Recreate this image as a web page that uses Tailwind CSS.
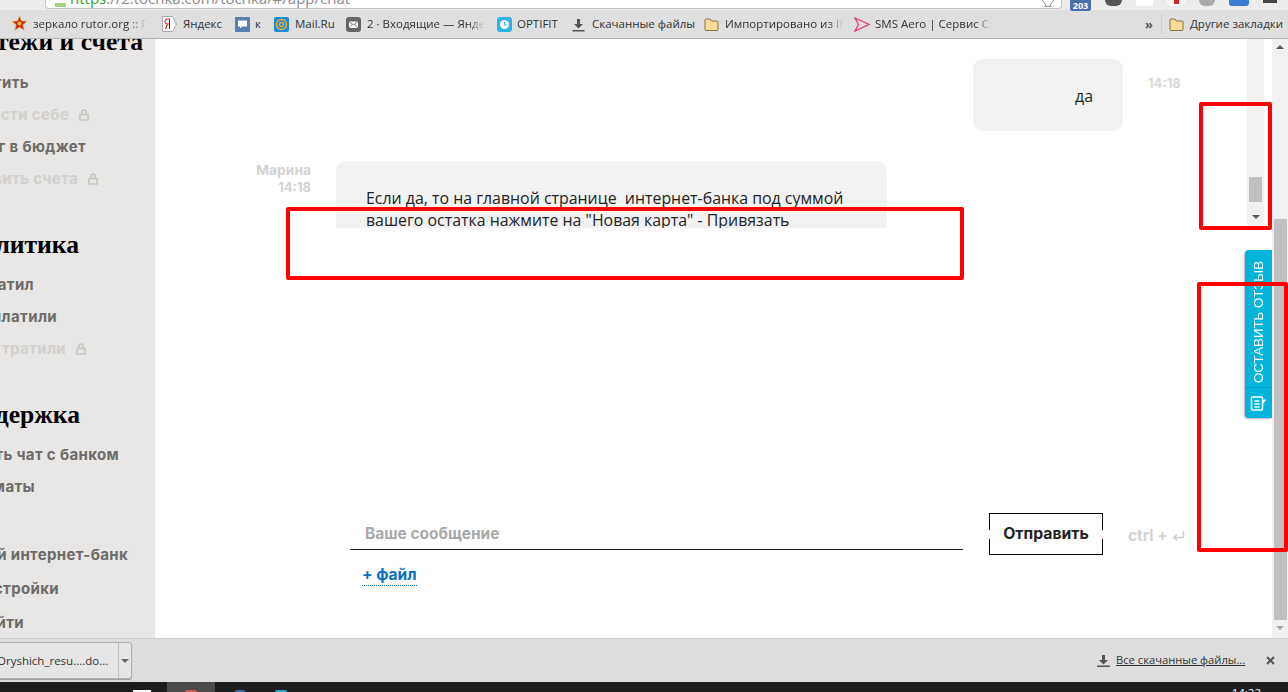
<!DOCTYPE html>
<html lang="ru">
<head>
<meta charset="utf-8">
<script src="https://cdn.jsdelivr.net/npm/@tailwindcss/browser@4"></script>
<title>Чат</title>
</head>
<body class="m-0 overflow-hidden bg-white">
<div class="relative flex h-[692px] w-[1288px] flex-col overflow-hidden font-['Open_Sans',sans-serif]">

  <!-- browser chrome -->
  <header class="relative z-10 flex h-[39px] shrink-0 flex-col border-b border-[#b4b4b4] bg-[#dfdfdf]">
    <div class="flex h-[10px] shrink-0 items-start bg-[#ececec]">
      <div class="ml-[45px] flex h-[9px] w-[1017px] items-end overflow-hidden rounded-b-sm border-b border-x border-[#c4c4c4] bg-white">
        <div class="ml-[9px] mb-[1px] h-[4px] w-[11px] shrink-0 bg-[#a5cf7d]"></div>
        <span class="ml-[4px] mb-[3px] whitespace-nowrap text-[15px] leading-[14px] text-[#8b8b8b]"><span class="text-[#2f9e2f]">https</span>://2.tochka.com/tochka/#/app/chat</span>
        <svg class="mb-[1px] ml-auto mr-[6px]" width="14" height="7" viewBox="0 0 14 7"><path d="M1 0l4 5-1 2 3-1 3 1-1-2 4-5" fill="none" stroke="#8a8a8a"/></svg>
      </div>
      <div class="ml-[8px] flex h-[11px] items-start gap-[14px]">
        <div class="flex h-[11px] w-[21px] items-end justify-center rounded-b-[2px] bg-[#4a6fa8] text-[9px] font-bold leading-[10px] text-white">203</div>
        <div class="h-[6px] w-[17px] rounded-b-full bg-[#555]"></div>
        <div class="h-[6px] w-[17px] bg-white"></div>
        <div class="flex h-[6px] w-[18px] justify-center rounded-b-full bg-white"><div class="h-[4px] w-[5px] bg-[#d22]"></div></div>
        <div class="h-[6px] w-[16px] rounded-b-[6px] bg-[#aaa]"></div>
        <div class="h-[6px] w-[20px] rounded-b-[3px] bg-[#3a7bd5]"></div>
        <div class="h-[3px] w-[14px] bg-[#444]"></div>
      </div>
    </div>
    <nav class="flex h-[28px] items-center whitespace-nowrap pl-[12px] text-[11.5px] text-[#333]">
      <a class="flex w-[150px] items-center gap-[6px] overflow-hidden">
        <svg class="shrink-0" width="15" height="16" viewBox="0 0 15 16"><path d="M7.500 0l2 5 5.500.3-4.200 3.500 1.400 5.400-4.700-3-4.700 3 1.400-5.400L0 5.300 5.500 5z" fill="#c9201c" stroke="#eebb33" stroke-width=".7"/><circle cx="7.500" cy="7.500" r="2" fill="#eebb33"/></svg>
        <span class="[mask-image:linear-gradient(to_right,black_85%,transparent)] w-[114px] overflow-hidden">зеркало rutor.org :: Па</span>
      </a>
      <a class="flex w-[73px] items-center gap-[6px]">
        <svg class="shrink-0" width="15" height="16" viewBox="0 0 15 16"><path d="M.5.500h10l4 7.500-4 7.500H.5z" fill="#fff" stroke="#aaa"/><path d="M7.500 3H5.500a2 2 0 0 0 0 5h2M7.500 3v10M5.500 8l-2 5" fill="none" stroke="#d00"/></svg><span>Яндекс</span>
      </a>
      <a class="flex w-[39px] items-center gap-[5px]">
        <svg class="shrink-0" width="15" height="15" viewBox="0 0 15 15"><rect width="15" height="15" fill="#5a7fae"/><path d="M3 3.500h9v6H7l-2 2v-2H3z" fill="#fff"/></svg><span>к</span>
      </a>
      <a class="flex w-[72px] items-center gap-[6px]">
        <svg class="shrink-0" width="15" height="15" viewBox="0 0 15 15"><rect width="15" height="15" rx="2" fill="#168de2"/><circle cx="7.500" cy="7.500" r="5" fill="none" stroke="#f9a51a" stroke-width="1.600"/><circle cx="7.500" cy="7.500" r="2" fill="none" stroke="#f9a51a" stroke-width="1.400"/></svg><span>Mail.Ru</span>
      </a>
      <a class="flex w-[151px] items-center gap-[6px] overflow-hidden">
        <svg class="shrink-0" width="15" height="15" viewBox="0 0 15 15"><rect width="15" height="15" rx="3" fill="#666"/><rect x="3" y="4.500" width="9" height="6.500" fill="#fff"/><path d="M3 4.500l4.500 3.500L12 4.500M3 11l3.500-4M12 11L8.500 7" fill="none" stroke="#666" stroke-width=".8"/></svg>
        <span class="[mask-image:linear-gradient(to_right,black_85%,transparent)] w-[118px] overflow-hidden">2 · Входящие — Яндекс</span>
      </a>
      <a class="flex w-[74px] items-center gap-[5px]">
        <svg class="shrink-0" width="15" height="15" viewBox="0 0 15 15"><rect width="15" height="15" rx="3" fill="#29b3ea"/><circle cx="7.500" cy="7.500" r="4.500" fill="#fff"/><path d="M7.500 5v3h2" fill="none" stroke="#29b3ea"/></svg><span>OPTIFIT</span>
      </a>
      <a class="flex w-[133px] items-center gap-[6px]">
        <svg class="shrink-0" width="15" height="15" viewBox="0 0 15 15"><path d="M6 2h3v5h3l-4.500 4.500L3 7h3zM1.500 13h12v1.500h-12z" fill="#555"/></svg><span>Скачанные файлы</span>
      </a>
      <a class="flex w-[150px] items-center gap-[6px] overflow-hidden">
        <svg class="shrink-0" width="15" height="15" viewBox="0 0 15 15"><path d="M1 3a1 1 0 0 1 1-1h4l1.500 2H13a1 1 0 0 1 1 1v7.500a1 1 0 0 1-1 1H2a1 1 0 0 1-1-1z" fill="#f8d998" stroke="#8c7445"/></svg>
        <span class="[mask-image:linear-gradient(to_right,black_88%,transparent)] w-[118px] overflow-hidden">Импортировано из IE</span>
      </a>
      <a class="flex w-[291px] items-center gap-[5px] overflow-hidden">
        <svg class="shrink-0" width="16" height="15" viewBox="0 0 16 15"><path d="M1 1l14 6.500L1 14l3.500-6.500z" fill="none" stroke="#e83a6d" stroke-width="1.300"/></svg>
        <span class="[mask-image:linear-gradient(to_right,black_88%,transparent)] w-[116px] overflow-hidden">SMS Aero | Сервис СМС</span>
      </a>
      <span class="w-[16px] text-[13px] font-bold leading-none text-[#555]">»</span>
      <span class="mr-[7px] h-[20px] w-px bg-[#c9d0d8]"></span>
      <a class="flex items-center gap-[6px]">
        <svg class="shrink-0" width="15" height="15" viewBox="0 0 15 15"><path d="M1 3a1 1 0 0 1 1-1h4l1.500 2H13a1 1 0 0 1 1 1v7.500a1 1 0 0 1-1 1H2a1 1 0 0 1-1-1z" fill="#f8d998" stroke="#8c7445"/></svg><span>Другие закладки</span>
      </a>
    </nav>
  </header>

  <!-- page -->
  <div class="flex min-h-0 flex-1">
    <!-- sidebar: rows are end-aligned so the left of each label runs off the visible edge -->
    <aside class="flex w-[155px] shrink-0 flex-col overflow-hidden whitespace-nowrap bg-[#e8e7e5] font-['Inter',sans-serif] text-[15px] font-bold leading-[32px] tracking-[0.35px] text-[#6e6b69]">
      <h2 class="mt-[-10px] flex w-[143px] justify-end font-['Liberation_Serif',serif] text-[25.600px] leading-[26px] tracking-normal text-black">Платежи и счета</h2>
      <a class="mt-[12px] flex w-[29px] justify-end">Заплатить</a>
      <a class="flex w-[89px] items-center justify-end gap-[10px] text-[#d2d1cf]">Перевести себе
        <svg class="shrink-0" width="10" height="12" viewBox="0 0 10 12"><path d="M3 5V3a2 2 0 0 1 4 0v2M1 5.500h8v5.500H1z" fill="none" stroke="#c8c7c5" stroke-width="1.700"/></svg></a>
      <a class="flex w-[86px] justify-end">Налог в бюджет</a>
      <a class="flex w-[98px] items-center justify-end gap-[10px] text-[#d2d1cf]">Выставить счета
        <svg class="shrink-0" width="10" height="12" viewBox="0 0 10 12"><path d="M3 5V3a2 2 0 0 1 4 0v2M1 5.500h8v5.500H1z" fill="none" stroke="#c8c7c5" stroke-width="1.700"/></svg></a>
      <h2 class="mt-[37px] flex w-[79px] justify-end font-['Liberation_Serif',serif] text-[25.600px] leading-[26px] tracking-normal text-black">Аналитика</h2>
      <a class="mt-[11px] flex w-[34px] justify-end">Потратил</a>
      <a class="flex w-[57px] justify-end">Заплатили</a>
      <a class="flex w-[86px] items-center justify-end gap-[10px] text-[#d2d1cf]">На что тратили
        <svg class="shrink-0" width="10" height="12" viewBox="0 0 10 12"><path d="M3 5V3a2 2 0 0 1 4 0v2M1 5.500h8v5.500H1z" fill="none" stroke="#c8c7c5" stroke-width="1.700"/></svg></a>
      <h2 class="mt-[37px] flex w-[80px] justify-end font-['Liberation_Serif',serif] text-[25.600px] leading-[26px] tracking-normal text-black">Поддержка</h2>
      <a class="mt-[11px] flex w-[119px] justify-end">Открыть чат с банком</a>
      <a class="flex w-[35px] justify-end">Форматы</a>
      <a class="mt-[36px] flex w-[128px] justify-end">Новый интернет-банк</a>
      <a class="mt-[2px] flex w-[59px] justify-end">Настройки</a>
      <a class="mt-[2px] flex w-[24px] justify-end">Выйти</a>
    </aside>

    <!-- main -->
    <main class="flex min-w-0 flex-1 flex-col">
      <section class="flex h-[189px] shrink-0 overflow-hidden">
        <div class="w-[1092px] shrink-0">
          <div class="mt-[20px] flex items-start">
            <div class="ml-[818px] flex h-[72px] w-[150px] shrink-0 items-center justify-end rounded-[10px] bg-[#f2f2f2] pr-[30px] pt-[3px] text-[15.900px] text-[#222]">да</div>
            <time class="ml-[25px] mt-[15px] font-['Inter',sans-serif] text-[13px] font-bold leading-[18px] text-[#d8d8d8]">14:18</time>
          </div>
          <div class="mt-[30px] flex items-start">
            <div class="w-[156px] shrink-0 pt-[1px] text-right font-['Inter',sans-serif] text-[13.800px] font-bold leading-[17px] text-[#d2d2d2]">Марина<br><span class="text-[13px]">14:18</span></div>
            <div class="ml-[25px] w-[551px] rounded-[10px] bg-[#f2f2f2] px-[30px] pb-[30px] pt-[26px] text-[15.900px] leading-[22px] text-[#222]">Если да, то на главной странице&nbsp; интернет-банка под суммой вашего остатка нажмите на "Новая карта" - Привязать</div>
          </div>
        </div>
        <div class="flex w-[17px] shrink-0 flex-col items-center bg-[#f1f1f1]">
          <div class="mt-[138px] h-[25px] w-[13px] bg-[#c0c0c0]"></div>
          <div class="mt-[13px] h-0 w-0 border-x-[4px] border-t-[4px] border-x-transparent border-t-[#555]"></div>
        </div>
      </section>
      <section class="flex flex-1 flex-col">
        <div class="mt-[285px] flex items-start">
          <div class="ml-[195px] mt-[11px] flex h-[26px] w-[613px] shrink-0 items-center border-b border-[#222] pb-[6px] pl-[15px] font-['Inter',sans-serif] text-[15.500px] font-bold text-[#a9a9a9]">Ваше сообщение</div>
          <button class="relative ml-[26px] h-[42px] w-[114px] shrink-0 border border-black bg-white font-['Inter',sans-serif] text-[15.750px] font-bold text-[#222]">Отправить
            <span class="absolute -left-px top-[16px] h-[9px] w-px bg-white"></span>
            <span class="absolute -right-px top-[16px] h-[9px] w-px bg-white"></span>
          </button>
          <div class="ml-[25px] mt-[14px] flex items-center gap-[4px] font-['Inter',sans-serif] text-[15.500px] font-bold leading-[18px] text-[#d2d2d2]">ctrl +
            <svg width="13" height="12" viewBox="0 0 13 12"><path d="M11.500 1v6.500H2M5 4.500l-3 3 3 3" fill="none" stroke="#cfcfcf" stroke-width="1.600"/></svg>
          </div>
        </div>
        <a class="ml-[207px] mt-[10px] w-fit border-b border-dotted border-[#0a6fc2] font-['Inter',sans-serif] text-[15.500px] font-bold leading-[20px] text-[#0a6fc2]">+ файл</a>
      </section>
    </main>

    <!-- page scrollbar -->
    <div class="flex w-[16px] shrink-0 flex-col items-center bg-[#f1f1f1]">
      <div class="mt-[6px] h-0 w-0 border-x-[4px] border-b-[4px] border-x-transparent border-b-[#555]"></div>
      <div class="mt-[170px] h-[401px] w-[13px] bg-[#c0c0c0]"></div>
      <div class="mt-[6px] h-0 w-0 border-x-[4px] border-t-[4px] border-x-transparent border-t-[#a8a8a8]"></div>
    </div>
  </div>

  <!-- downloads bar -->
  <footer class="flex h-[44px] shrink-0 items-center border-t border-[#cfcfcf] bg-[#dedede] text-[11.500px] text-[#333]">
    <div class="ml-[-4px] flex h-[37px] w-[136px] items-center overflow-hidden rounded-[3px] border border-[#b0b0b0] bg-[#e6e6e6] shadow-[0_1px_1px_#999]">
      <span class="w-[121px] overflow-hidden whitespace-nowrap">Oryshich_resu....do...</span>
      <span class="flex h-full flex-1 items-center justify-center border-l border-[#c0c0c0]"><span class="h-0 w-0 border-x-[4px] border-t-[4px] border-x-transparent border-t-[#666]"></span></span>
    </div>
    <svg class="ml-[964px]" width="15" height="15" viewBox="0 0 15 15"><path d="M6 2h3v5h3l-4.500 4.500L3 7h3zM1 12.500h13V14H1z" fill="#555"/></svg>
    <a class="ml-[5px] whitespace-nowrap text-[11.200px] underline">Все скачанные файлы...</a>
    <svg class="ml-[21px]" width="9" height="9" viewBox="0 0 9 9"><path d="M1 1l7 7M8 1l-7 7" stroke="#555" stroke-width="2"/></svg>
  </footer>

  <!-- taskbar -->
  <div class="flex h-[10px] shrink-0 items-start overflow-hidden bg-[#1c1c1c]">
    <div class="ml-[133px] mt-[8px] h-[2px] w-[18px] bg-white"></div>
    <div class="ml-[16px] flex h-[10px] w-[48px] justify-center bg-[#4a4a4a]"><div class="mt-[8px] h-[2px] w-[12px] rounded-t-full bg-[#d55]"></div></div>
    <div class="ml-[20px] mt-[8px] h-[2px] w-[10px] rounded-t-full bg-[#2a6fb0]"></div>
    <div class="ml-[30px] mt-[8px] h-[2px] w-[12px] rounded-t-full bg-[#2fa0c8]"></div>
    <span class="ml-auto mr-[27px] mt-[4px] text-[11.500px] leading-[14px] text-white">14:22</span>
  </div>

  <!-- feedback tab -->
  <aside class="absolute left-[1245px] top-[250px] flex h-[168px] w-[27px] flex-col rounded-l-[4px] bg-[#00b4dc] shadow-[-1px_1px_2px_rgba(0,0,0,.3)]">
    <span class="flex h-[137px] items-center justify-start rotate-180 pt-[4px] font-['Liberation_Sans',sans-serif] text-[13.300px] leading-none whitespace-nowrap text-white [writing-mode:vertical-rl]">ОСТАВИТЬ ОТЗЫВ</span>
    <span class="flex flex-1 items-center justify-center border-t border-[#0a9cc0]">
      <svg width="17" height="17" viewBox="0 0 17 17"><path d="M2.500 2h9a1 1 0 0 1 1 1v11a1 1 0 0 1-1 1h-9a1 1 0 0 1-1-1V3a1 1 0 0 1 1-1zM12.500 6l3-1-3 3M4.500 6h5M4.500 9h5M4.500 12h5" fill="none" stroke="#fff" stroke-width="1.500"/></svg>
    </span>
  </aside>

  <!-- hand-drawn red annotation rectangles -->
  <div class="absolute left-[286px] top-[207px] h-[73px] w-[678px] rounded-[2px] border-[4px] border-[#ff0000]"></div>
  <div class="absolute left-[1199px] top-[102px] h-[128px] w-[73px] rounded-[2px] border-[4px] border-[#ff0000]"></div>
  <div class="absolute left-[1197px] top-[282px] h-[270px] w-[91px] rounded-[2px] border-[4px] border-[#ff0000]"></div>
</div>
</body>
</html>
